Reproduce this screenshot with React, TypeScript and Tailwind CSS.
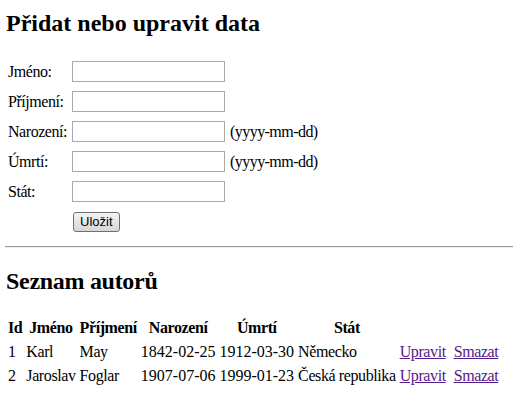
import React from "react";

const serif = { fontFamily: '"Liberation Serif", "Times New Roman", serif' };

function FormRow({ label, hint }: { label: string; hint?: boolean }) {
  return (
    <div className="flex h-[21px] items-center">
      <div className="w-[67px] pl-[3px] text-[16px] leading-[20px] tracking-[-0.45px] whitespace-nowrap">{label}</div>
      <div className="h-[21px] w-[153px] border border-[#a9a9a9] bg-white" />
      {hint && (
        <div className="ml-[5px] text-[16px] leading-[20px] tracking-[-0.55px] whitespace-nowrap">(yyyy-mm-dd)</div>
      )}
    </div>
  );
}

const rows = [
  { id: 1, jmeno: "Karl", prijmeni: "May", nar: "1842-02-25", umrti: "1912-03-30", stat: "Německo" },
  { id: 2, jmeno: "Jaroslav", prijmeni: "Foglar", nar: "1907-07-06", umrti: "1999-01-23", stat: "Česká republika" },
];

const cell = "p-[1px] whitespace-nowrap";
const word = "p-[1px] whitespace-nowrap tracking-[-0.4px]";

export default function App() {
  return (
    <div className="min-h-[406px] w-[513px] overflow-hidden bg-white pl-[5px] text-black" style={serif}>
      <h2 className="pt-[9px] pl-[1px] text-[24px] font-bold leading-[28px] whitespace-nowrap">Přidat nebo upravit data</h2>

      <div className="mt-[24px] flex flex-col gap-[9px]">
        <FormRow label="Jméno:" />
        <FormRow label="Příjmení:" />
        <FormRow label="Narození:" hint />
        <FormRow label="Úmrtí:" hint />
        <FormRow label="Stát:" />
      </div>
      <div className="mt-[10px] pl-[68px]">
        <button
          className="flex h-[20px] items-center rounded-[3px] border border-[#707070] bg-gradient-to-b from-[#f4f4f4] to-[#d6d6d6] px-[6px] text-[13px] leading-[16px] text-black"
          style={{ fontFamily: '"Liberation Sans", Arial, sans-serif' }}
        >
          Uložit
        </button>
      </div>

      <div className="mt-[14px] h-[2px] w-[520px] border-t border-t-[#9a9a9a] border-b border-b-[#eeeeee]" />

      <h2 className="mt-[19px] pl-[1px] text-[24px] font-bold leading-[28px] tracking-[-0.3px] whitespace-nowrap">
        Seznam autorů
      </h2>

      <table className="mt-[20px] border-separate border-spacing-[2px] text-[16px] leading-[20px]">
        <thead>
          <tr>
            <th className={`${word} w-[15px] text-center font-bold`}>Id</th>
            <th className={`${word} w-[49px] text-center font-bold`}>Jméno</th>
            <th className={`${word} w-[56px] text-center font-bold`}>Příjmení</th>
            <th className={`${word} w-[75px] text-center font-bold`}>Narození</th>
            <th className={`${word} w-[75px] text-center font-bold`}>Úmrtí</th>
            <th className={`${word} w-[99px] text-center font-bold`}>Stát</th>
            <th className={`${cell} w-[52px]`}></th>
            <th className={`${cell} w-[44px]`}></th>
          </tr>
        </thead>
        <tbody>
          {rows.map((r) => (
            <tr key={r.id}>
              <td className={cell}>{r.id}</td>
              <td className={word}>{r.jmeno}</td>
              <td className={word}>{r.prijmeni}</td>
              <td className={cell}>{r.nar}</td>
              <td className={cell}>{r.umrti}</td>
              <td className={word}>{r.stat}</td>
              <td className={word}>
                <a href="#" className="text-[#551a8b] underline">Upravit</a>
              </td>
              <td className={word}>
                <a href="#" className="text-[#551a8b] underline">Smazat</a>
              </td>
            </tr>
          ))}
        </tbody>
      </table>
    </div>
  );
}
